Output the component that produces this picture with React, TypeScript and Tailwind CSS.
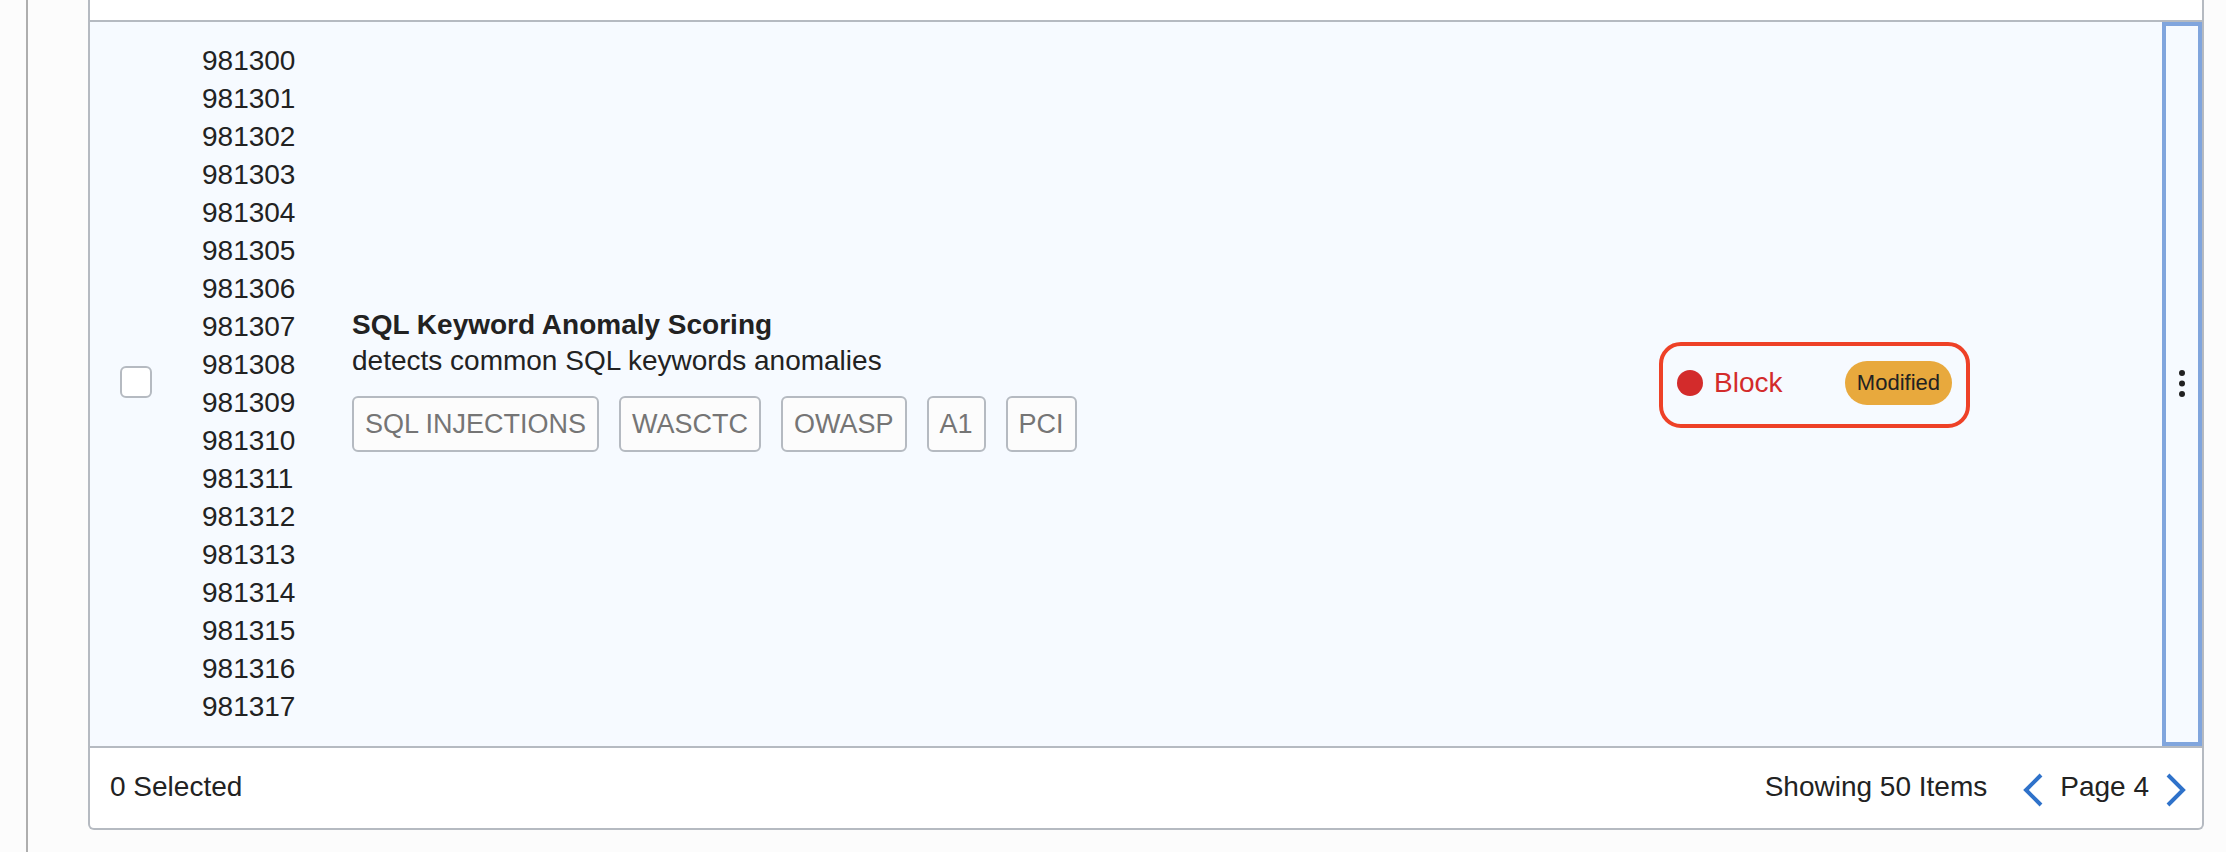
import React from "react";

const ruleIds = Array.from({ length: 18 }, (_, i) => 981300 + i);
const tags = ["SQL INJECTIONS", "WASCTC", "OWASP", "A1", "PCI"];

function Chevron({ direction }: { direction: "left" | "right" }) {
  return (
    <svg width="20" height="34" viewBox="0 0 20 34" fill="none" stroke="#2f72ca" strokeWidth="4" aria-hidden="true">
      <path d={direction === "left" ? "M18 2 L3 17 L18 32" : "M2 2 L17 17 L2 32"} />
    </svg>
  );
}

function RuleRow() {
  return (
    <tr className="bg-[#f6faff]">
      <td className="border-t-2 border-[#b5bac1] pl-[30px] align-middle">
        <input
          id="rule"
          type="checkbox"
          aria-labelledby="rule-name"
          className="mb-1 block size-8 appearance-none rounded-md border-2 border-[#b5bac1] bg-white checked:bg-[#2f72ca]"
        />
      </td>
      <td className="border-t-2 border-[#b5bac1] py-5">
        <ul>
          {ruleIds.map((id) => (
            <li key={id}>{id}</li>
          ))}
        </ul>
      </td>
      <td className="border-t-2 border-[#b5bac1] pb-[9px] align-middle">
        <label id="rule-name" htmlFor="rule" className="block leading-9 font-bold">
          SQL Keyword Anomaly Scoring
        </label>
        <p className="leading-9">detects common SQL keywords anomalies</p>
        <ul className="mt-[17px] flex flex-wrap gap-5">
          {tags.map((tag) => (
            <li
              key={tag}
              className="rounded-md border-2 border-[#b5bac1] bg-[#fcfcfc] px-[11px] py-2 text-[27px] leading-9 text-[#757575]"
            >
              {tag}
            </li>
          ))}
        </ul>
      </td>
      <td className="border-t-2 border-[#b5bac1] pt-0.5 align-middle">
        <div className="flex h-[86px] w-[311px] items-center rounded-[22px] border-4 border-[#ee4127] px-[14px] pb-1">
          <span className="mr-[11px] size-[26px] rounded-full bg-[#d32b2b]" />
          <span className="text-[#d32b2b]">Block</span>
          <span className="ml-auto flex h-11 items-center rounded-full bg-[#e8a93d] px-3 text-[22px]">
            Modified
          </span>
        </div>
      </td>
      <td className="h-px border-t-2 border-[#b5bac1]">
        <button
          type="button"
          aria-label="Rule actions"
          className="flex h-full w-full items-center justify-center border-4 border-[#80a5dd] pb-0.5"
        >
          <svg width="6" height="27" viewBox="0 0 6 27" fill="#222222" aria-hidden="true">
            <circle cx="3" cy="3" r="3" />
            <circle cx="3" cy="13.5" r="3" />
            <circle cx="3" cy="24" r="3" />
          </svg>
        </button>
      </td>
    </tr>
  );
}

export default function App() {
  return (
    <div className="flex min-h-screen bg-[#fcfcfc] font-['Liberation_Sans',sans-serif] text-[28px] leading-[38px] text-[#222222]">
      <aside className="w-7 shrink-0 border-r-2 border-[#aeaeae]" />
      <main className="min-w-0 flex-1 pr-[22px] pl-[60px]">
        <section className="rounded-b-md border-x-2 border-b-2 border-[#b5bac1] bg-white pt-5">
          <table className="w-full table-fixed border-separate border-spacing-0">
            <colgroup>
              <col className="w-[112px]" />
              <col className="w-[150px]" />
              <col />
              <col className="w-[503px]" />
              <col className="w-10" />
            </colgroup>
            <tbody>
              <RuleRow />
            </tbody>
          </table>
          <footer className="flex h-[82px] items-center justify-between border-t-2 border-[#b5bac1] pr-4 pb-0.5 pl-5">
            <span>0 Selected</span>
            <nav className="flex items-center" aria-label="Pagination">
              <span className="mr-9">Showing 50 Items</span>
              <button type="button" aria-label="Previous page" className="mt-1.5">
                <Chevron direction="left" />
              </button>
              <span className="mx-[17px]">Page 4</span>
              <button type="button" aria-label="Next page" className="mt-1.5">
                <Chevron direction="right" />
              </button>
            </nav>
          </footer>
        </section>
      </main>
    </div>
  );
}
